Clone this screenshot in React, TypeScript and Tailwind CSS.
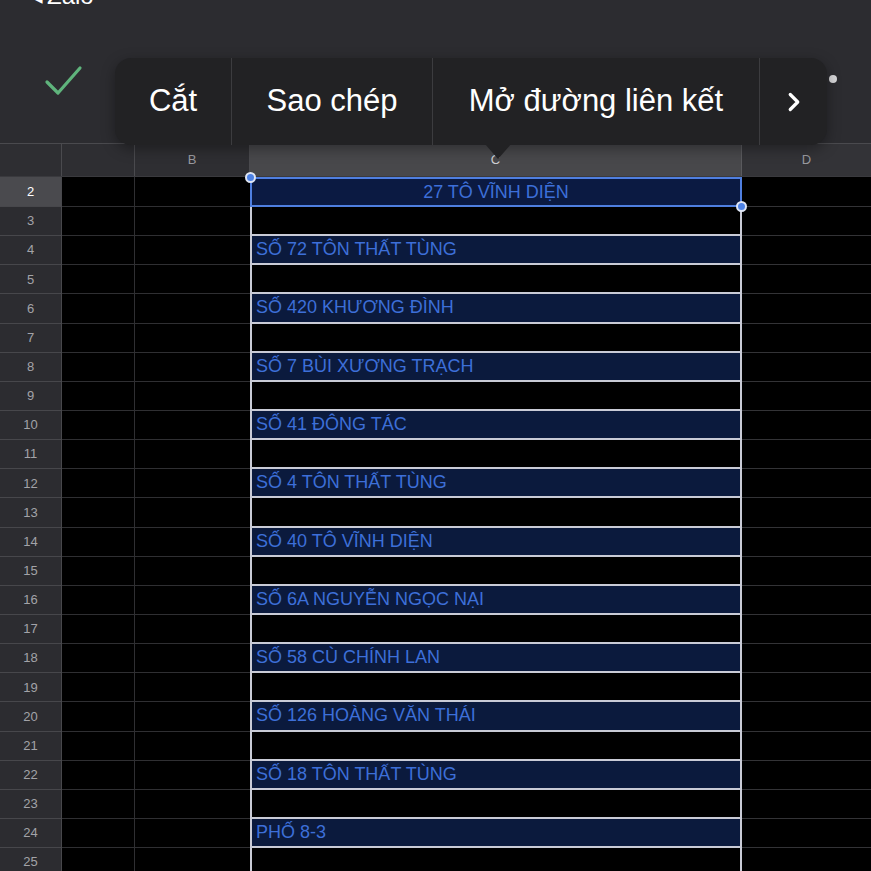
import React from "react";
import { ChevronRight } from "lucide-react";

const ROWS: { n: number; text?: string }[] = [
  { n: 2, text: "27 TÔ VĨNH DIỆN" },
  { n: 3 },
  { n: 4, text: "SỐ 72 TÔN THẤT TÙNG" },
  { n: 5 },
  { n: 6, text: "SỐ 420 KHƯƠNG ĐÌNH" },
  { n: 7 },
  { n: 8, text: "SỐ 7 BÙI XƯƠNG TRẠCH" },
  { n: 9 },
  { n: 10, text: "SỐ 41 ĐÔNG TÁC" },
  { n: 11 },
  { n: 12, text: "SỐ 4 TÔN THẤT TÙNG" },
  { n: 13 },
  { n: 14, text: "SỐ 40 TÔ VĨNH DIỆN" },
  { n: 15 },
  { n: 16, text: "SỐ 6A NGUYỄN NGỌC NẠI" },
  { n: 17 },
  { n: 18, text: "SỐ 58 CÙ CHÍNH LAN" },
  { n: 19 },
  { n: 20, text: "SỐ 126 HOÀNG VĂN THÁI" },
  { n: 21 },
  { n: 22, text: "SỐ 18 TÔN THẤT TÙNG" },
  { n: 23 },
  { n: 24, text: "PHỐ 8-3" },
  { n: 25 },
];

const font = { fontFamily: '"Liberation Sans", Arial, sans-serif' };

function Handle({ className }: { className: string }) {
  return (
    <span
      className={`absolute w-[11px] h-[11px] rounded-full bg-[#4d82e6] border-2 border-[#dfe6f5] z-10 ${className}`}
    />
  );
}

export default function App() {
  return (
    <div className="w-[871px] h-[871px] overflow-hidden bg-black text-white" style={font}>
      {/* Top toolbar */}
      <div className="relative h-[143px] bg-[#2c2c30]">
        <div className="absolute left-[31px] top-[-16px] flex items-center gap-1 text-[24px] leading-none text-white">
          <span className="text-[15px]">◀</span>
          <span>Zalo</span>
        </div>

        <svg className="absolute left-[43px] top-[64px]" width="42" height="34" viewBox="0 0 42 34">
          <path d="M4 18 L15 29 L37 4" fill="none" stroke="#5fb47c" strokeWidth="3.2" strokeLinecap="round" strokeLinejoin="round" />
        </svg>

        <span className="absolute left-[829px] top-[75px] w-[8px] h-[8px] rounded-full bg-[#d6d6d8]" />

        {/* Edit menu popover */}
        <div className="absolute left-[115px] top-[58px] h-[87px] flex rounded-[16px] bg-[#222224] z-20 shadow-[0_4px_14px_rgba(0,0,0,0.35)]">
          <div className="w-[117px] flex items-center justify-center text-[31px] border-r border-[#3c3c3f]">Cắt</div>
          <div className="w-[201px] flex items-center justify-center text-[31px] border-r border-[#3c3c3f]">Sao chép</div>
          <div className="w-[327px] flex items-center justify-center text-[31px] border-r border-[#3c3c3f]">Mở đường liên kết</div>
          <div className="w-[67px] flex items-center justify-center">
            <ChevronRight className="w-[30px] h-[30px]" strokeWidth={2.6} />
          </div>
          <span className="absolute left-[370px] top-[86px] w-0 h-0 border-l-[13px] border-r-[13px] border-t-[15px] border-l-transparent border-r-transparent border-t-[#222224]" />
        </div>
      </div>

      {/* Column headers */}
      <div className="flex h-[34px] bg-[#2e2e32] border-t border-[#4a4a4e] border-b border-b-[#3a3a3e] text-[13px] text-[#9a9a9f]">
        <div className="w-[62px] border-r border-[#4a4a4e]" />
        <div className="w-[73px] border-r border-[#4a4a4e]" />
        <div className="w-[115px] flex items-center justify-center border-r border-[#4a4a4e]">B</div>
        <div className="w-[492px] flex items-center justify-center bg-[#48484b] border-r border-[#5a5a5e] text-[#d0d0d4]">C</div>
        <div className="flex-1 flex items-center justify-center bg-[#333337]">D</div>
      </div>

      {/* Rows */}
      {ROWS.map((r) => {
        const selected = r.n === 2;
        const filled = !!r.text;
        return (
          <div key={r.n} className={`flex ${selected ? "h-[30px]" : "h-[29.15px]"}`}>
            <div
              className={`w-[62px] flex items-center justify-center text-[13px] border-r border-b border-[#47474b] ${
                selected ? "bg-[#4a4a4e] text-white" : "bg-[#2c2c30] text-[#a3a3a8]"
              }`}
            >
              {r.n}
            </div>
            <div className="w-[73px] border-r border-b border-[#2f2f32]" />
            <div className="w-[115px] border-b border-[#2f2f32]" />
            {selected ? (
              <div className="relative w-[492px] flex items-center justify-center bg-[#0b1a42] border-2 border-[#4f7fe0] text-[18px] text-[#3d6fd8]">
                <Handle className="left-[-7px] top-[-7px]" />
                <Handle className="right-[-7px] bottom-[-7px]" />
                {r.text}
              </div>
            ) : (
              <div
                className={`w-[492px] flex items-center pl-[4px] border-x-2 border-b-2 border-[#c9cbd6] text-[18px] text-[#3d6fd8] ${
                  filled ? "bg-[#0b1a3d]" : "bg-black"
                }`}
              >
                {r.text}
              </div>
            )}
            <div className="flex-1 border-b border-[#333336]" />
          </div>
        );
      })}
    </div>
  );
}
